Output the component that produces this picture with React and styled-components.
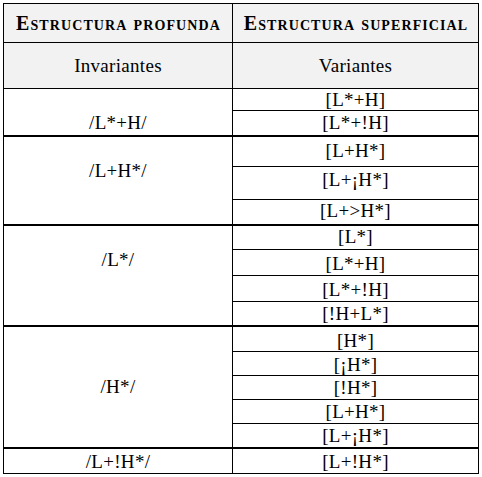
import React from "react";
import styled, { createGlobalStyle } from "styled-components";

const groups = [
	{
		label: "/L*+H/",
		labelTop: 23,
		rows: [
			{ text: "[L*+H]", h: 21, pt: 0 },
			{ text: "[L*+!H]", h: 24, pt: 1 },
		],
	},
	{
		label: "/L+H*/",
		labelTop: 23,
		rows: [
			{ text: "[L+H*]", h: 29, pt: 3 },
			{ text: "[L+¡H*]", h: 32, pt: 2 },
			{ text: "[L+>H*]", h: 24, pt: 0 },
		],
	},
	{
		label: "/L*/",
		labelTop: 23,
		rows: [
			{ text: "[L*]", h: 23, pt: 0 },
			{ text: "[L*+H]", h: 25, pt: 3 },
			{ text: "[L*+!H]", h: 25, pt: 3 },
			{ text: "[!H+L*]", h: 23, pt: 1 },
		],
	},
	{
		label: "/H*/",
		labelTop: 49,
		rows: [
			{ text: "[H*]", h: 24, pt: 3 },
			{ text: "[¡H*]", h: 23, pt: 2 },
			{ text: "[!H*]", h: 23, pt: 1 },
			{ text: "[L+H*]", h: 23, pt: 1 },
			{ text: "[L+¡H*]", h: 23, pt: 1 },
		],
	},
	{
		label: "/L+!H*/",
		labelTop: 2,
		rows: [{ text: "[L+!H*]", h: 24, pt: 2 }],
	},
];

const App = () => {
	return (
		<>
			<GlobalStyle />
			<Frame>
				<HeadRow $h={38}>
					<HeadCell $left>Estructura profunda</HeadCell>
					<HeadCell>Estructura superficial</HeadCell>
				</HeadRow>
				<HeadRow $h={45}>
					<SubHeadCell $left>Invariantes</SubHeadCell>
					<SubHeadCell>Variantes</SubHeadCell>
				</HeadRow>
				{groups.map((g, i) => (
					<Group key={i} $last={i === groups.length - 1}>
						<LabelCell $top={g.labelTop}>{g.label}</LabelCell>
						<VariantList>
							{g.rows.map((r, j) => (
								<VariantRow key={j} $h={r.h} $pt={r.pt}>
									{r.text}
								</VariantRow>
							))}
						</VariantList>
					</Group>
				))}
			</Frame>
		</>
	);
};

const GlobalStyle = createGlobalStyle`
	html, body {
		margin: 0;
		padding: 0;
		background: #ffffff;
	}
`;

const Frame = styled.div`
	box-sizing: border-box;
	width: 476px;
	margin: 3px;
	border: 1px solid #000;
	font-family: "Liberation Serif", "Times New Roman", serif;
	color: #000;
	font-size: 19px;
	letter-spacing: 0.3px;
	line-height: 22px;
`;

const HeadRow = styled.div`
	display: grid;
	grid-template-columns: 229px 1fr;
	height: ${(p) => p.$h}px;
	border-bottom: 1px solid #000;
	background-color: #f2f2f2;
	box-sizing: content-box;
`;

const HeadCell = styled.div`
	display: flex;
	align-items: center;
	justify-content: center;
	padding-left: 1px;
	font-size: 20px;
	font-weight: bold;
	font-variant: small-caps;
	letter-spacing: 1.1px;
	white-space: nowrap;
	${(p) => p.$left && "border-right: 1px solid #000;"}
`;

const SubHeadCell = styled.div`
	display: flex;
	align-items: center;
	justify-content: center;
	${(p) => p.$left && "border-right: 1px solid #000;"}
`;

const Group = styled.div`
	display: grid;
	grid-template-columns: 229px 1fr;
	border-bottom: ${(p) => (p.$last ? "none" : "2px solid #000")};
`;

const LabelCell = styled.div`
	border-right: 1px solid #000;
	text-align: center;
	padding-top: ${(p) => p.$top}px;
`;

const VariantList = styled.div`
	display: flex;
	flex-direction: column;
`;

const VariantRow = styled.div`
	box-sizing: content-box;
	height: ${(p) => p.$h - p.$pt}px;
	padding-top: ${(p) => p.$pt}px;
	text-align: center;
	white-space: nowrap;
	& + & {
		border-top: 1px solid #000;
	}
`;

export default App;
